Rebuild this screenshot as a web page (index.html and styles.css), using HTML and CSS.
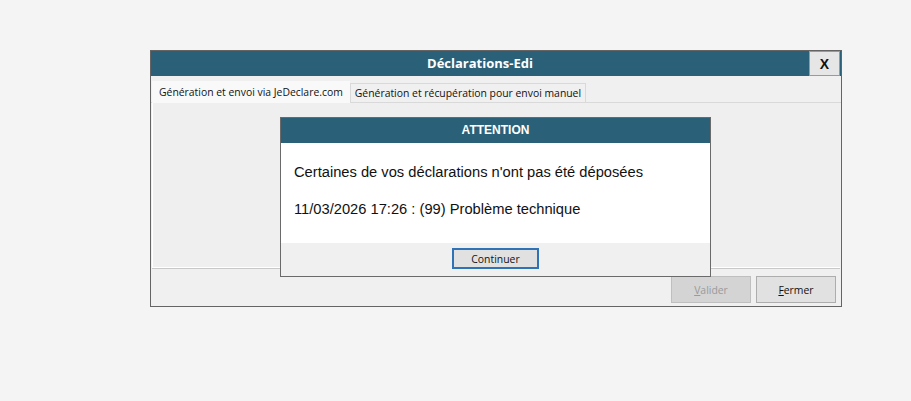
FILE: index.html
```html
<!DOCTYPE html>
<html>
	<head>
		<meta charset="utf-8">
		<link rel="stylesheet" href="styles.css">
		<title>Déclarations-Edi</title>
	</head>
	<body>
		<div class="window">
			<div class="titlebar">
				<span class="title">Déclarations-Edi</span>
				<button class="close">X</button>
			</div>
			<div class="tabs">
				<span class="tab tab-active">Génération et envoi via JeDeclare.com</span>
				<span class="tab">Génération et récupération pour envoi manuel</span>
			</div>
			<div class="panel"></div>
			<div class="footer">
				<button class="btn" disabled><u>V</u>alider</button>
				<button class="btn"><u>F</u>ermer</button>
			</div>
		</div>

		<div class="dialog">
			<div class="dialog-title">ATTENTION</div>
			<div class="dialog-body">
				<p>Certaines de vos déclarations n'ont pas été déposées</p>
				<p>11/03/2026 17:26 : (99) Problème technique</p>
			</div>
			<div class="dialog-footer">
				<button class="btn btn-default">Continuer</button>
			</div>
		</div>
	</body>
</html>
```

FILE: styles.css
```css
body {
	margin: 0;
	padding: 50px 0 0 150px;
	background-color: #f4f4f4;
	font-family: "Open Sans", "Liberation Sans", sans-serif;
}
.window {
	width: 690px;
	height: 255px;
	border: 1px solid #646464;
	background-color: #f0f0f0;
	display: flex;
	flex-direction: column;
}
.titlebar {
	height: 25px;
	background-color: #2a6178;
	display: flex;
	align-items: flex-start;
}
.title {
	flex: 1;
	text-align: center;
	color: white;
	font-weight: bold;
	font-size: 13px;
	line-height: 25px;
}
.close {
	width: 31px;
	height: 25px;
	margin: 0 1px 0 0;
	padding: 0;
	border: 1px solid #9a9a9a;
	background-color: #e6e6e6;
	font-family: "Liberation Sans", sans-serif;
	font-weight: bold;
	font-size: 14px;
	color: #111;
}
.tabs {
	display: flex;
	align-items: flex-end;
	height: 26px;
	padding-left: 1px;
	border-bottom: 1px solid #d9d9d9;
	font-size: 10.4px;
	color: #111;
}
.tab {
	height: 18px;
	line-height: 18px;
	padding: 0 4px;
	border: 1px solid #d9d9d9;
	border-bottom: none;
	background-color: #f0f0f0;
}
.tab-active {
	height: 21px;
	line-height: 20px;
	padding: 0 6px;
	background-color: #f9f9f9;
	border-color: #f9f9f9;
	margin-bottom: -1px;
}
.panel {
	height: 164px;
	margin: 0 1px 0 1px;
	border-left: 1px solid #ffffff;
	border-bottom: 1px solid #ffffff;
	box-shadow: 0 1px 0 #c8c8c8;
	background-color: #efefef;
}
.footer {
	flex: 1;
	display: flex;
	justify-content: flex-end;
	align-items: flex-start;
	gap: 5px;
	padding: 8px 5px 0 0;
}
.btn {
	width: 80px;
	height: 27px;
	border: 1px solid #adadad;
	background-color: #e1e1e1;
	font-family: "Open Sans", "Liberation Sans", sans-serif;
	font-size: 10.4px;
	color: #111;
	padding: 0;
}
.btn:disabled {
	color: #9a9a9a;
	background-color: #d4d4d4;
	border-color: #bfbfbf;
}
.dialog {
	position: absolute;
	left: 280px;
	top: 117px;
	width: 429px;
	height: 158px;
	border: 1px solid #6a6a6a;
	background-color: #f0f0f0;
	display: flex;
	flex-direction: column;
}
.dialog-title {
	height: 25px;
	line-height: 25px;
	background-color: #2a6178;
	color: white;
	text-align: center;
	font-family: "Liberation Sans", sans-serif;
	font-weight: bold;
	font-size: 12px;
}
.dialog-body {
	height: 100px;
	background-color: white;
	padding: 0 13px;
	font-family: "Liberation Sans", sans-serif;
	font-size: 14.7px;
	color: #111;
}
.dialog-body p {
	margin: 0;
	line-height: 37px;
}
.dialog-body p:first-child {
	margin-top: 11px;
}
.dialog-footer {
	flex: 1;
	display: flex;
	justify-content: center;
	padding-top: 5px;
}
.btn-default {
	width: 87px;
	height: 21px;
	border: 2px solid #2f72b5;
	background-color: #e1e1e1;
}
```
